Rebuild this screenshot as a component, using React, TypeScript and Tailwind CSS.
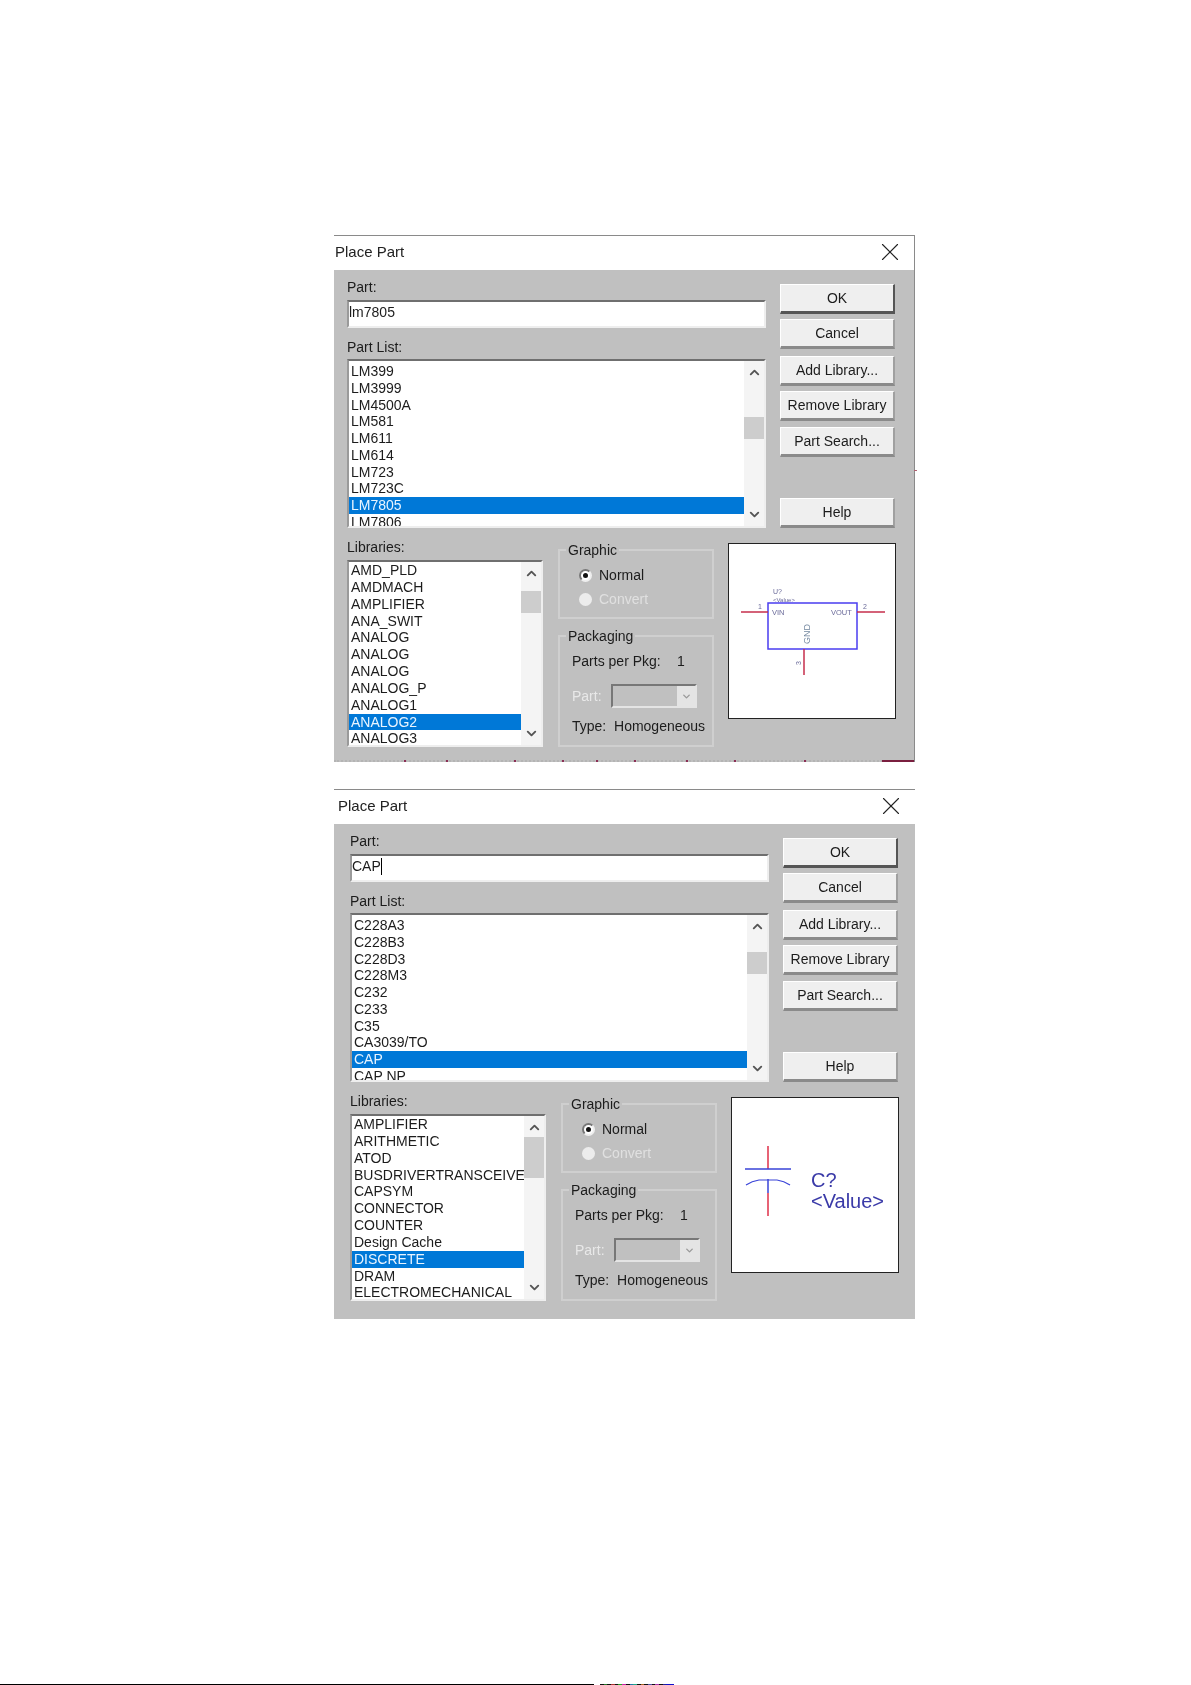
import type { ReactNode } from 'react';
import { ChevronDown, ChevronUp, X } from 'lucide-react';

const BAR_COLOURS = ['#111', '#2a7a2a', '#111', '#a33', '#111', '#2a2', '#c2a', '#111', '#27a', '#2a8', '#111', '#a62', '#111', '#55a', '#111', '#a3a', '#111', '#229', '#11c', '#11c'];

function ListBox({
  rows,
  selected,
  thumbTop,
  thumbHeight,
  rowClass,
  className,
}: {
  rows: string[];
  selected: string;
  thumbTop: string;
  thumbHeight: string;
  rowClass: string;
  className: string;
}) {
  return (
    <div className={`flex overflow-hidden bg-white border-t-2 border-l-2 border-t-[#6f6f6f] border-l-[#9a9a9a] border-b-2 border-r-2 border-b-[#eeeeee] border-r-[#eeeeee] ${className}`}>
      <div className="flex-1 min-w-0 overflow-hidden">
        {rows.map((row, i) => (
          <div
            key={row + i}
            className={`pl-[2px] whitespace-nowrap ${rowClass} ${row === selected ? 'bg-[#0078d7] text-[#e8f4ff]' : ''}`}
          >
            {row}
          </div>
        ))}
      </div>
      <div className="w-[20px] shrink-0 bg-[#f4f4f4] flex flex-col items-center">
        <ChevronUp size={15} strokeWidth={3} className="mt-[4px] text-[#555]" />
        <div className={`w-full bg-[#cdcdcd] ${thumbTop} ${thumbHeight}`} />
        <ChevronDown size={15} strokeWidth={3} className="mt-auto mb-[4px] text-[#555]" />
      </div>
    </div>
  );
}

function Btn({ label, className, strong }: { label: string; className: string; strong?: boolean }) {
  return (
    <button
      className={`w-[115px] flex items-center justify-center bg-[#efefef] border-t border-l border-t-white border-l-white border-b-[3px] border-r-2 ${strong ? 'border-b-[#555] border-r-[#555] border-t-[#777] border-l-[#bbb]' : 'border-b-[#8a8a8a] border-r-[#a0a0a0]'} ${className}`}
    >
      {label}
    </button>
  );
}

function Radio({ label, on }: { label: string; on?: boolean }) {
  return (
    <div className={`flex items-center h-[24px] ${on ? '' : 'text-[#e0e0e0]'}`}>
      <span className={`w-[13px] h-[13px] rounded-full flex items-center justify-center ${on ? 'bg-white border-2 border-t-[#777] border-l-[#777] border-b-[#eee] border-r-[#eee]' : 'bg-[#ececec]'}`}>
        {on && <span className="w-[5px] h-[5px] rounded-full bg-[#111]" />}
      </span>
      <span className="ml-[7px]">{label}</span>
    </div>
  );
}

function Dialog({
  parts,
  partValue,
  partSelected,
  partThumb,
  libs,
  libSelected,
  libThumb,
  libThumbHeight,
  preview,
  caret,
  titleClass,
  bodyClass,
  frameClass,
  footer,
}: {
  parts: string[];
  partValue: string;
  partSelected: string;
  partThumb: string;
  libs: string[];
  libSelected: string;
  libThumb: string;
  libThumbHeight: string;
  preview: ReactNode;
  caret?: boolean;
  titleClass: string;
  bodyClass: string;
  frameClass: string;
  footer?: ReactNode;
}) {
  return (
    <div className={`relative w-[581px] ml-[334px] flex flex-col ${frameClass}`}>
      <div className={`h-[34px] bg-white flex items-center justify-between pr-[9px] text-[15px] text-[#222] ${titleClass}`}>
        <span className="-mt-[2px]">Place Part</span>
        <X size={30} strokeWidth={0.9} className="text-[#222] -mt-[2px]" />
      </div>
      <div className={`bg-[#c0c0c0] pt-[9px] ${bodyClass}`}>
        <div className="flex">
          <div className="w-[419px]">
            <div className="h-[16px] leading-[16px]">Part:</div>
            <div className="mt-[5px] h-[28px] bg-white border-t-2 border-l-2 border-t-[#6f6f6f] border-l-[#9a9a9a] border-b-2 border-r-2 border-b-[#eeeeee] border-r-[#eeeeee] flex items-center pb-[3px]">
              {partValue}
              {caret && <span className="w-px h-[17px] bg-black" />}
            </div>
            <div className="mt-[11px] h-[16px] leading-[16px]">Part List:</div>
            <ListBox
              rows={parts}
              selected={partSelected}
              thumbTop={partThumb}
              thumbHeight="h-[22px]"
              rowClass="h-[16.75px] leading-[16.75px] first:mt-[2px]"
              className="mt-[4px] h-[169px]"
            />
          </div>
          <div className="ml-[14px] mt-[5px] flex flex-col">
            <Btn label="OK" strong className="h-[30px]" />
            <Btn label="Cancel" className="h-[30px] mt-[5px]" />
            <Btn label="Add Library..." className="h-[30px] mt-[7px]" />
            <Btn label="Remove Library" className="h-[30px] mt-[5px]" />
            <Btn label="Part Search..." className="h-[30px] mt-[6px]" />
            <Btn label="Help" className="h-[30px] mt-[41px]" />
          </div>
        </div>
        <div className="flex mt-[11px]">
          <div className="w-[196px]">
            <div className="h-[16px] leading-[16px]">Libraries:</div>
            <ListBox
              rows={libs}
              selected={libSelected}
              thumbTop={libThumb}
              thumbHeight={libThumbHeight}
              rowClass="h-[16.85px] leading-[16.85px]"
              className="mt-[5px] h-[187px]"
            />
          </div>
          <div className="ml-[15px] w-[156px] mt-[3px]">
            <fieldset className="h-[77px] border-2 border-[#cfcfcf]">
              <legend className="px-[2px] ml-[6px] h-[16px] leading-[16px]">Graphic</legend>
              <div className="pl-[19px] pt-[5px]">
                <Radio label="Normal" on />
                <Radio label="Convert" />
              </div>
            </fieldset>
            <fieldset className="mt-[9px] h-[119px] border-2 border-[#cfcfcf]">
              <legend className="px-[2px] ml-[6px] h-[16px] leading-[16px]">Packaging</legend>
              <div className="pl-[12px]">
                <div className="h-[20px] leading-[20px] mt-[7px] flex">
                  <span className="w-[105px]">Parts per Pkg:</span>
                  <span>1</span>
                </div>
                <div className="flex items-center mt-[13px] h-[24px]">
                  <span className="text-[#e8e8e8] w-[39px]">Part:</span>
                  <div className="w-[86px] h-[24px] bg-[#c0c0c0] border-2 border-t-[#777] border-l-[#777] border-b-[#e4e4e4] border-r-[#e4e4e4] flex justify-end">
                    <div className="w-[18px] bg-[#e4e4e4] flex items-center justify-center">
                      <ChevronDown size={11} strokeWidth={3} className="text-[#999]" />
                    </div>
                  </div>
                </div>
                <div className="h-[20px] leading-[20px] mt-[8px] whitespace-nowrap">
                  Type:&nbsp; Homogeneous
                </div>
              </div>
            </fieldset>
          </div>
          <div className="ml-[14px] mt-[4px] w-[168px] h-[176px] bg-white border border-[#222] shrink-0">
            {preview}
          </div>
        </div>
      </div>
      {footer}
    </div>
  );
}

function RegulatorSymbol() {
  return (
    <svg width="166" height="174" viewBox="0 0 166 174">
      <rect x="39" y="59" width="89" height="46" fill="none" stroke="#4a3df0" strokeWidth="1.5" />
      <path d="M12 68H39M128 68H156M75 105V131" stroke="#c62f4c" strokeWidth="1.5" fill="none" />
      <g fontFamily="'Liberation Sans', sans-serif" fill="#6b6b9a">
        <text x="44" y="50" fontSize="7">U?</text>
        <text x="44" y="58" fontSize="6">&lt;Value&gt;</text>
        <text x="43" y="71" fontSize="7.5">VIN</text>
        <text x="102" y="71" fontSize="7.5">VOUT</text>
        <text x="29" y="65" fontSize="7">1</text>
        <text x="134" y="65" fontSize="7">2</text>
        <text x="0" y="0" fontSize="9" fill="#7488a0" transform="translate(81 100) rotate(-90)">GND</text>
        <text x="0" y="0" fontSize="7" transform="translate(72 121) rotate(-90)">3</text>
      </g>
    </svg>
  );
}

function CapSymbol() {
  return (
    <svg width="166" height="174" viewBox="0 0 166 174">
      <path d="M36 48V71M36 95V118" stroke="#e0314a" strokeWidth="1.5" fill="none" />
      <path d="M36 81V95M13 71H59" stroke="#3a44d8" strokeWidth="1.5" fill="none" />
      <path d="M14 87Q20 83 27 82H45Q52 83 58 87" stroke="#3a44d8" strokeWidth="1.2" fill="none" />
      <g fontFamily="'Liberation Sans', sans-serif" fill="#3a3aa8" fontSize="20">
        <text x="79" y="89">C?</text>
        <text x="79" y="110">&lt;Value&gt;</text>
      </g>
    </svg>
  );
}

const STRIP_MARKS = [70, 112, 180, 228, 262, 300, 352, 400, 470];

export default function App() {
  return (
    <div className="h-[1685px] bg-white flex flex-col overflow-hidden pt-[235px] text-[14px] text-[#1c1c1c] font-['Liberation_Sans',Arial,sans-serif] blur-[0.4px]">
      <Dialog
        parts={['LM399', 'LM3999', 'LM4500A', 'LM581', 'LM611', 'LM614', 'LM723', 'LM723C', 'LM7805', 'LM7806']}
        partValue="lm7805"
        partSelected="LM7805"
        partThumb="mt-[37px]"
        libs={['AMD_PLD', 'AMDMACH', 'AMPLIFIER', 'ANA_SWIT', 'ANALOG', 'ANALOG', 'ANALOG', 'ANALOG_P', 'ANALOG1', 'ANALOG2', 'ANALOG3']}
        libSelected="ANALOG2"
        libThumb="mt-[10px]"
        libThumbHeight="h-[22px]"
        preview={<RegulatorSymbol />}
        titleClass="pl-[1px]"
        bodyClass="pl-[13px] pb-[13px]"
        frameClass="border-t border-r border-[#8a8a8a]"
        footer={
          <>
            <div className="h-[2px] bg-[#c0c0c0] flex relative">
              <div className="w-full border-t-2 border-dotted border-[#b4b4b4]" />
              {STRIP_MARKS.map((x) => (
                <span key={x} className="absolute top-0 w-[2px] h-[2px] bg-[#8a2f55]" style={{ left: x }} />
              ))}
              <span className="absolute top-0 right-0 w-[32px] h-[2px] bg-[#7a1f3f]" />
            </div>
            <span className="absolute top-[234px] -right-[3px] w-[3px] h-px bg-[#b06070]" />
          </>
        }
      />
      <div className="mt-[27px]">
        <Dialog
          parts={['C228A3', 'C228B3', 'C228D3', 'C228M3', 'C232', 'C233', 'C35', 'CA3039/TO', 'CAP', 'CAP NP']}
          partValue="CAP"
          partSelected="CAP"
          partThumb="mt-[18px]"
          libs={['AMPLIFIER', 'ARITHMETIC', 'ATOD', 'BUSDRIVERTRANSCEIVER', 'CAPSYM', 'CONNECTOR', 'COUNTER', 'Design Cache', 'DISCRETE', 'DRAM', 'ELECTROMECHANICAL']}
          libSelected="DISCRETE"
          libThumb="mt-[2px]"
          libThumbHeight="h-[41px]"
          preview={<CapSymbol />}
          caret
          titleClass="pl-[4px]"
          bodyClass="pl-[16px] pb-[18px]"
          frameClass="border-t border-[#8a8a8a]"
        />
      </div>
      <div className="mt-auto h-px flex">
        <div className="w-[594px] bg-black" />
        <div className="w-[6px]" />
        {BAR_COLOURS.map((c, i) => (
          <span key={i} className="w-[3.7px]" style={{ backgroundColor: c }} />
        ))}
      </div>
    </div>
  );
}
